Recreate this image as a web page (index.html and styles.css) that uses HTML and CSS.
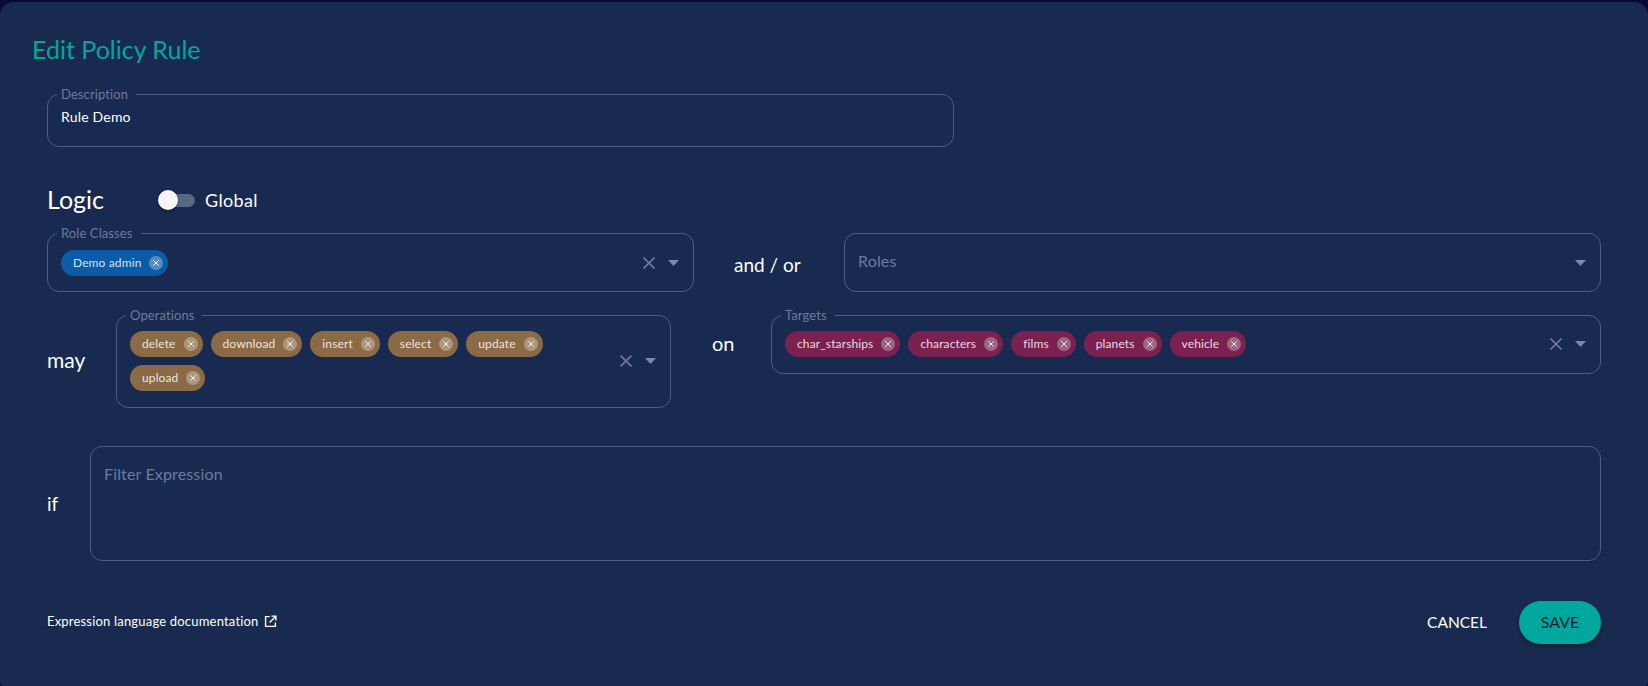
FILE: index.html
```html
<!DOCTYPE html>
<html lang="en">
<head>
<meta charset="utf-8">
<title>Edit Policy Rule</title>
<link rel="stylesheet" href="styles.css">
</head>
<body>
<svg class="defs" width="0" height="0" aria-hidden="true">
  <symbol id="chip-x" viewBox="0 0 14 14"><path d="M4.600 4.600l4.800 4.800M9.400 4.600l-4.800 4.800" stroke="currentColor" stroke-width="1" stroke-linecap="round" fill="none"/></symbol>
  <symbol id="clear" viewBox="0 0 12 12"><path d="M.5.5l11 11M11.500.5l-11 11" stroke="currentColor" stroke-width="1.600" fill="none"/></symbol>
  <symbol id="caret" viewBox="0 0 11 6"><path d="M0 0h11L5.500 6z" fill="currentColor"/></symbol>
</svg>
<main class="panel">
  <h1 class="title">Edit Policy Rule</h1>

  <fieldset class="field field-desc">
    <legend>Description</legend>
    <div class="value">Rule Demo</div>
  </fieldset>

  <div class="logic-row">
    <h2 class="logic">Logic</h2>
    <div class="switch"><span class="thumb"></span></div>
    <span class="switch-label">Global</span>
  </div>

  <div class="row row-roles">
    <fieldset class="field field-select field-rc">
      <legend>Role Classes</legend>
      <div class="chips">
        <span class="chip chip-blue">Demo admin<span class="chip-del"><svg><use href="#chip-x"/></svg></span></span>
      </div>
      <svg class="ic-clear"><use href="#clear"/></svg>
      <svg class="ic-caret"><use href="#caret"/></svg>
    </fieldset>
    <span class="word word-andor">and / or</span>
    <div class="field field-select field-roles">
      <div class="placeholder">Roles</div>
      <svg class="ic-caret"><use href="#caret"/></svg>
    </div>
  </div>

  <div class="row row-ops">
    <span class="word word-may">may</span>
    <fieldset class="field field-select field-ops">
      <legend>Operations</legend>
      <div class="chips">
        <span class="chip chip-brown">delete<span class="chip-del"><svg><use href="#chip-x"/></svg></span></span>
        <span class="chip chip-brown">download<span class="chip-del"><svg><use href="#chip-x"/></svg></span></span>
        <span class="chip chip-brown">insert<span class="chip-del"><svg><use href="#chip-x"/></svg></span></span>
        <span class="chip chip-brown">select<span class="chip-del"><svg><use href="#chip-x"/></svg></span></span>
        <span class="chip chip-brown">update<span class="chip-del"><svg><use href="#chip-x"/></svg></span></span>
        <span class="chip chip-brown">upload<span class="chip-del"><svg><use href="#chip-x"/></svg></span></span>
      </div>
      <svg class="ic-clear"><use href="#clear"/></svg>
      <svg class="ic-caret"><use href="#caret"/></svg>
    </fieldset>
    <span class="word word-on">on</span>
    <fieldset class="field field-select field-targets">
      <legend>Targets</legend>
      <div class="chips">
        <span class="chip chip-plum">char_starships<span class="chip-del"><svg><use href="#chip-x"/></svg></span></span>
        <span class="chip chip-plum">characters<span class="chip-del"><svg><use href="#chip-x"/></svg></span></span>
        <span class="chip chip-plum">films<span class="chip-del"><svg><use href="#chip-x"/></svg></span></span>
        <span class="chip chip-plum">planets<span class="chip-del"><svg><use href="#chip-x"/></svg></span></span>
        <span class="chip chip-plum">vehicle<span class="chip-del"><svg><use href="#chip-x"/></svg></span></span>
      </div>
      <svg class="ic-clear"><use href="#clear"/></svg>
      <svg class="ic-caret"><use href="#caret"/></svg>
    </fieldset>
  </div>

  <div class="row row-if">
    <span class="word word-if">if</span>
    <div class="field field-filter"><div class="placeholder">Filter Expression</div></div>
  </div>

  <footer class="footer">
    <a class="doc-link">Expression language documentation
      <svg class="ic-ext" viewBox="0 0 14 14"><path d="M6 1.700H1.700v10.600h10.600V8M8 1.200h4.800V6M12.500 1.500L6 8" stroke="currentColor" stroke-width="1.500" fill="none"/></svg>
    </a>
    <div class="actions">
      <span class="btn-cancel">CANCEL</span>
      <span class="btn-save">SAVE</span>
    </div>
  </footer>
</main>
</body>
</html>
```
FILE: styles.css
```css
* { box-sizing: border-box; }
html, body { margin: 0; height: 100%; }
body {
  background: #08083a;
  font-family: "Lato", "Noto Sans", sans-serif;
  color: #fff;
  overflow: hidden;
}
.defs { position: absolute; }
.panel {
  height: 684px;
  margin-top: 2px;
  background: #182a4f;
  border-radius: 14px 14px 4px 4px;
  padding: 31px 47px 0 47px;
  display: flex;
  flex-direction: column;
}
.title {
  margin: 0 0 0 -15px;
  font-size: 25px;
  line-height: 32px;
  font-weight: 400;
  color: #00a79d;
}
.field {
  margin: 0;
  padding: 0;
  min-width: 0;
  border: 1px solid #4e5d80;
  border-radius: 12px;
  position: relative;
}
.field legend {
  margin-left: -4px;
  padding: 0 8px 0 4px;
  font-size: 13px;
  line-height: 14px;
  letter-spacing: .1px;
  color: #6d7a9c;
}
.field-desc {
  width: 907px;
  height: 60px;
  margin-top: 22px;
  padding: 6px 13px 0;
}
.value { font-size: 14px; line-height: 20px; letter-spacing: .2px; }
.logic-row {
  display: flex;
  align-items: center;
  margin-top: 37px;
  height: 32px;
}
.logic { margin: 0 0 2px; font-size: 25px; line-height: 32px; font-weight: 400; width: 113px; }
.switch {
  width: 35px;
  height: 13px;
  margin-right: 10px;
  border-radius: 7px;
  background: #5a6783;
  position: relative;
}
.thumb {
  position: absolute;
  left: -2px;
  top: -4px;
  width: 20px;
  height: 20px;
  border-radius: 50%;
  background: #f5f5f5;
  box-shadow: 0 1px 3px rgba(0, 0, 0, .4);
}
.switch-label { font-size: 18px; letter-spacing: .35px; margin-bottom: 1px; }
.row { display: flex; }
.row-roles { margin-top: 10px; align-items: flex-start; }
.row-ops { margin-top: 16px; align-items: flex-start; }
.row-if { margin-top: 38px; align-items: center; }
.word { font-size: 19px; line-height: 24px; }
.field-select {
  display: flex;
  align-items: center;
  padding: 0 14px 6px 13px;
}
.field-ops, .field-targets { padding-bottom: 8px; }
.field-select .chips { flex: 1; margin-right: 8px; }
.chips { display: flex; flex-wrap: wrap; gap: 8px; }
.chip {
  display: inline-flex;
  align-items: center;
  height: 26px;
  padding: 0 5px 0 12px;
  border-radius: 13px;
  font-size: 12px;
  line-height: 26px;
  letter-spacing: .12px;
  white-space: nowrap;
  color: rgba(255, 255, 255, .85);
}
.chip-blue { background: #0a5ca8; }
.chip-brown { background: #8b6b45; }
.chip-plum { background: #7a2150; }
.chip-del {
  width: 14px;
  height: 14px;
  margin-left: 8px;
  border-radius: 50%;
  background: rgba(255, 255, 255, .3);
  display: inline-block;
}
.chip-del svg { display: block; width: 14px; height: 14px; color: #fff; }
.ic-clear { width: 12px; height: 12px; color: #6d7a9c; flex: none; margin-right: 13px; }
.ic-caret { width: 11px; height: 6px; color: #7d86ac; flex: none; }
.field-rc { width: 647px; height: 66px; }
.word-andor { margin: 27px 0 0 40px; width: 110px; }
.field-roles { flex: 1; height: 59px; margin-top: 7px; padding-bottom: 0; justify-content: space-between; }
.placeholder { font-size: 16px; line-height: 24px; letter-spacing: .15px; color: #6d7a9c; }
.field-roles .placeholder { margin-bottom: 4px; }
.word-may { width: 69px; margin-top: 40px; font-size: 21px; }
.field-ops { width: 555px; height: 100px; }
.word-on { margin: 23px 0 0 41px; width: 59px; font-size: 20px; }
.field-targets { flex: 1; height: 66px; }
.word-if { width: 43px; }
.field-filter { flex: 1; height: 115px; padding: 15px 13px; }
.footer {
  display: flex;
  justify-content: space-between;
  align-items: center;
  margin-top: 40px;
}
.doc-link { font-size: 13px; letter-spacing: .19px; display: inline-flex; align-items: center; gap: 5px; margin-bottom: 3px; }
.ic-ext { width: 13px; height: 13px; }
.actions { display: flex; align-items: center; gap: 32px; }
.btn-cancel { font-size: 15.5px; margin-bottom: 2px; }
.btn-save {
  width: 82px;
  height: 43px;
  padding-bottom: 2px;
  border-radius: 22px;
  background: #00a79d;
  color: #0f2230;
  font-size: 16px;
  display: flex;
  align-items: center;
  justify-content: center;
  box-shadow: 0 2px 4px rgba(0, 0, 0, .3);
}
```
